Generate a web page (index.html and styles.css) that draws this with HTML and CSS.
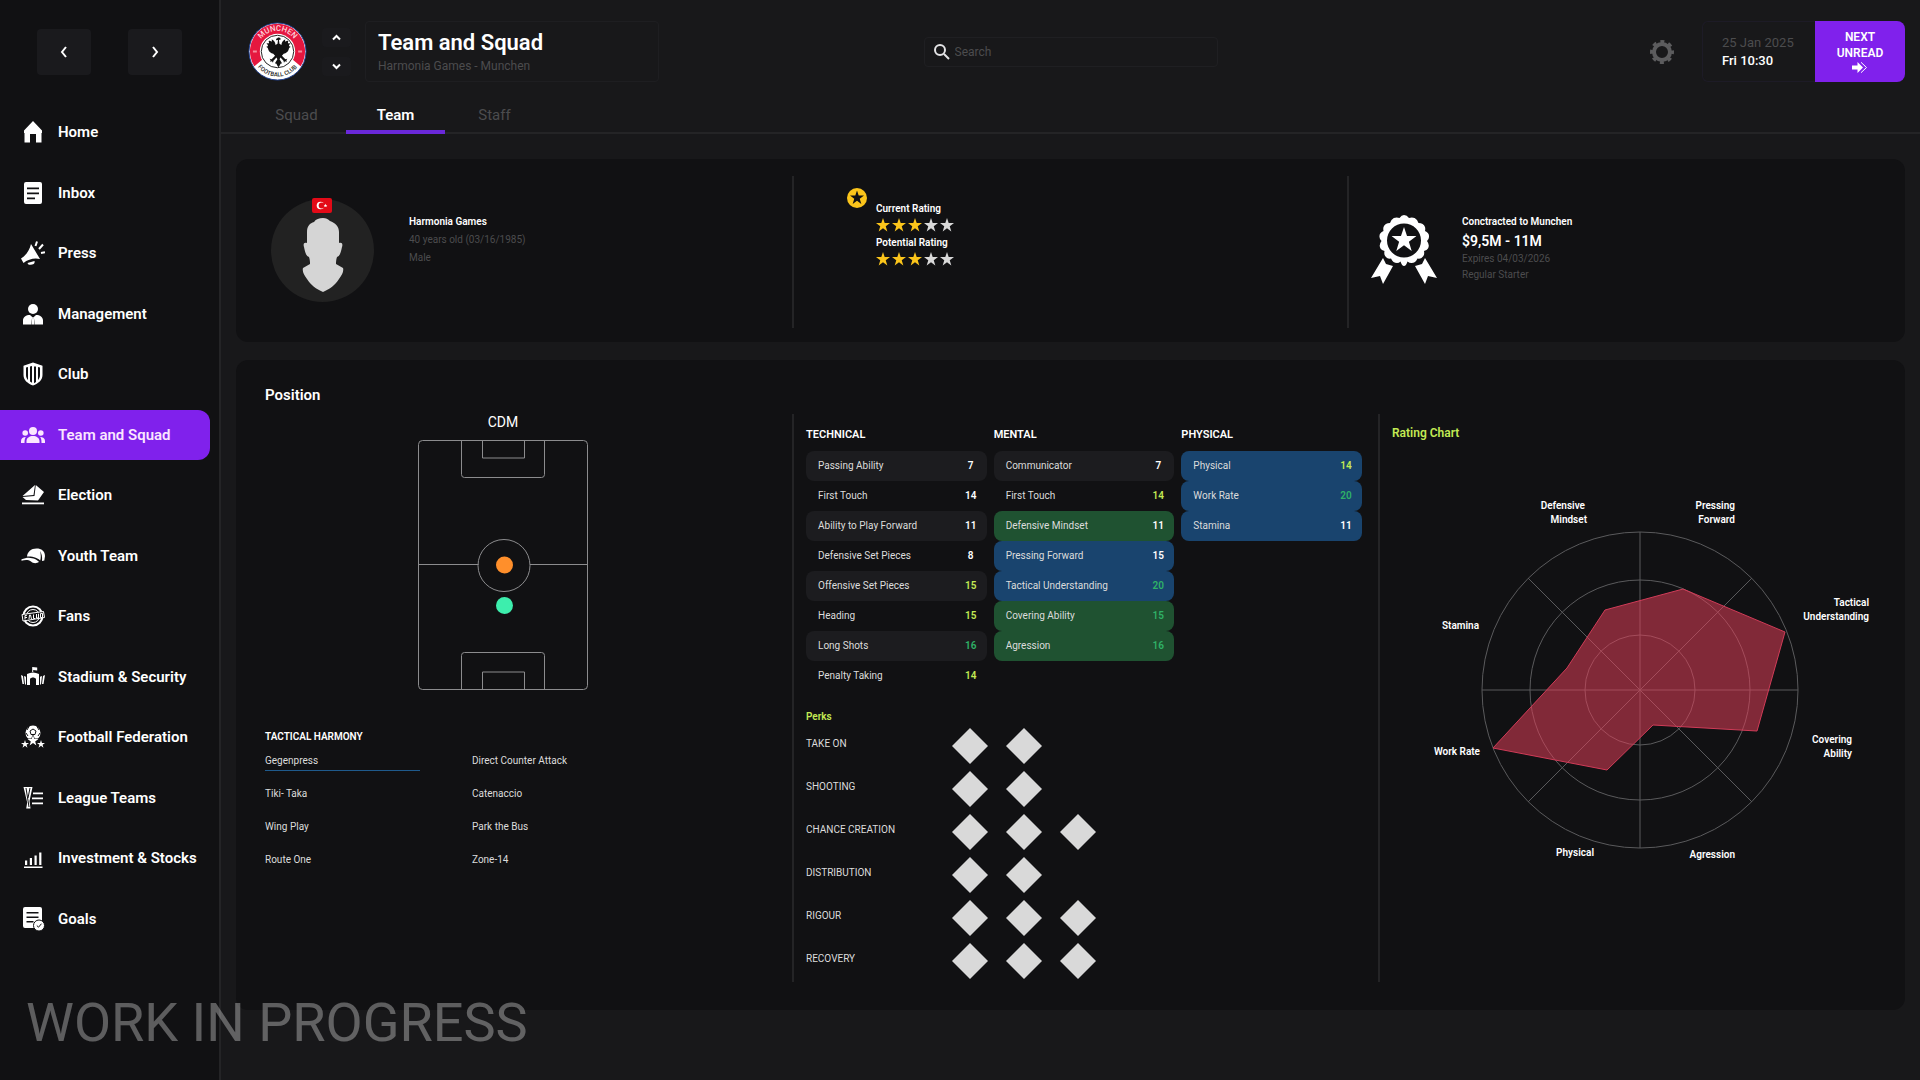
FILE: index.html
```html
<!DOCTYPE html>
<html lang="en">
<head>
<meta charset="utf-8">
<meta name="viewport" content="width=device-width, initial-scale=1">
<title>Team and Squad</title>
<link rel="stylesheet" href="styles.css">
</head>
<body>
<svg class="defs" aria-hidden="true">
  <symbol id="star" viewBox="0 0 24 24"><path d="M12 0l2.900 8.700H24l-7.300 5.400 2.700 8.900L12 17.600 4.600 23l2.700-8.900L0 8.700h9.100z"/></symbol>
</svg>
<div class="app">
  <aside class="sidebar">
    <div class="history">
      <button class="history-btn" type="button" aria-label="Back"><svg width="18" height="18" viewBox="0 0 18 18"><path d="M11 4L7 9l4 5"/></svg></button>
      <button class="history-btn" type="button" aria-label="Forward"><svg width="18" height="18" viewBox="0 0 18 18"><path d="M7 4l4 5-4 5"/></svg></button>
    </div>
    <nav class="menu" aria-label="Main">
      <a class="menu-item" href="#"><svg viewBox="0 0 24 24"><path d="M12 1l9 9.500V13h-.500v9.500H15V14H9v8.500H3.500V13H3v-2.500z"/></svg>Home</a>
      <a class="menu-item" href="#"><svg viewBox="0 0 24 24"><path fill-rule="evenodd" d="M5 1h14q2 0 2 2v18q0 2-2 2H5q-2 0-2-2V3q0-2 2-2zM6 6.500v1.700h12V6.500zm0 5v1.700h12v-1.700zm0 5v1.700h8v-1.700z"/></svg>Inbox</a>
      <a class="menu-item" href="#"><svg viewBox="0 0 24 24"><path d="M10 3l9 15c-5-1.500-12 0-16.500 4L0 17.500C5.500 14 8.500 9 10 3zM6.500 22l7-2c.5 2-.5 3-2.500 3.500S7 24 6.500 22z"/><path class="line" d="M14.500 5L16 .5M18 8l4-4.500M20 12l4-.8"/></svg>Press</a>
      <a class="menu-item" href="#"><svg viewBox="0 0 24 24"><circle cx="12" cy="7" r="5"/><path d="M2 22.500v-4c0-3.500 3-5.500 7-5.500l2.200 2-1 7.500zM22 22.500v-4c0-3.500-3-5.500-7-5.500l-2.200 2 1 7.500z"/><path d="M11.300 15h1.400l.8 7.500h-3z"/></svg>Management</a>
      <a class="menu-item" href="#"><svg viewBox="0 0 24 24"><path fill-rule="evenodd" d="M12 .5l9.500 3.200V13c0 5-4 8.500-9.500 10.500C6.500 21.500 2.500 18 2.500 13V3.700zM5 5.500V13c0 2 .8 3.700 2 5V5zm4-1v15l2 1.200V4zm4 0v16.700l2-1.200V4.500zm4 .5v13c1.200-1.300 2-3 2-5V5.500z"/></svg>Club</a>
      <a class="menu-item active" href="#" aria-current="page"><svg viewBox="0 0 24 24"><circle cx="12" cy="8" r="4"/><circle cx="4.200" cy="10" r="2.800"/><circle cx="19.800" cy="10" r="2.800"/><path d="M5.500 20v-2c0-3 3-5 6.500-5s6.500 2 6.500 5v2zM0 20v-2c0-2.500 2-4 5-4-1 1-1.500 2.500-1.500 6zM24 20v-2c0-2.500-2-4-5-4 1 1 1.500 2.500 1.500 6z"/></svg>Team and Squad</a>
      <a class="menu-item" href="#"><svg viewBox="0 0 24 24"><path d="M1.500 13L14 2l-1.500 10zM14.800 2L23 9l-6 8.500-12-.5-3.500-3 12-1z"/><path d="M1 19.500h22v1.800H1z"/></svg>Election</a>
      <a class="menu-item" href="#"><svg viewBox="0 0 24 24"><path d="M6 12.500C6.500 8 10 4.500 15.500 4.500c5 0 8.500 2.500 8.500 7.500l-.7 4.500-2.300.5c.5-4.500-.5-7.500-2-10 1 3.500 1 7 .2 9.500-3.700-3.500-8.200-4-13.200-4zM6 13.800c5 0 8.500.7 12 4-2.500 2.200-6 1.700-8-.3-3-2-6-1.500-9.500-.8v-1.500z"/></svg>Youth Team</a>
      <a class="menu-item" href="#"><svg viewBox="0 0 24 24"><circle class="line" cx="12" cy="12" r="9.500"/><circle class="thin" cx="12" cy="12" r="6.500"/><path class="plate" d="M1 10.500L22.500 7.500l1 6L2 17z"/><path class="thin" d="M4 15.500v-4l2-.3M4 13.500h2M8 15l.5-4h1l1 4M12.500 10.500v4h1.500M15.500 10v4h2v-4.300M19.500 9.500v4h2V9.300z"/></svg>Fans</a>
      <a class="menu-item" href="#"><svg viewBox="0 0 24 24"><path d="M0 10l2 1 1 8H1.500zM3 11l2 .7v7.800H4zM24 10l-2 1-1 8h1.500zM21 11l-2 .7v7.800h1zM6 9c4-2 8-2 12 0v11h-3v-6c-1-2-5-2-6 0v6H6zM11.200 7V2l5 .5v3l-4-.5v2z"/></svg>Stadium &amp; Security</a>
      <a class="menu-item" href="#"><svg viewBox="0 0 24 24"><circle cx="12" cy="8" r="7.500"/><path class="dark" d="M12 4l3 2-1 3.500h-4L9 6zM8 1.500L6 5M16 1.500L18 5M5 8l2 3M19 8l-2 3"/><use class="cut" href="#star" x="5" y="8.500" width="14" height="14"/><use href="#star" x="6.500" y="10" width="11" height="11"/><use href="#star" x="0" y="15" width="8" height="8"/><use href="#star" x="16" y="15" width="8" height="8"/></svg>Football Federation</a>
      <a class="menu-item" href="#"><svg viewBox="0 0 24 24"><path d="M2.500 1h9L8.500 15l1 7.500H5.200l1-6z"/><path class="dark" d="M5 2l3 19M9 2L7 12"/><path d="M12 6.500h10v1.800H12zM11 11.500h11v1.800H11zM11 16.500h11v1.800H11z"/></svg>League Teams</a>
      <a class="menu-item" href="#"><svg viewBox="0 0 24 24"><path d="M3 20.500h18.500V22H3zM4 14.500h2.200V19H4zM8.800 12H11v7H8.800zM13.500 9.500h2.200V19h-2.200zM18.200 6.500h2.200V19h-2.200z"/></svg>Investment &amp; Stocks</a>
      <a class="menu-item" href="#"><svg viewBox="0 0 24 24"><path fill-rule="evenodd" d="M4 0h15q2 0 2 2v19H4q-2 0-2-2V2q0-2 2-2zM5.500 5v1.500h12V5zm0 4.500V11h12V9.500zm0 4.500v1.500h7V14z"/><circle cx="18" cy="18.500" r="5.500" class="rim"/><path class="dark" d="M15.800 18.500l1.700 1.700 3-3.500"/></svg>Goals</a>
    </nav>
  </aside>

  <div class="page">
    <header class="header">
      <div class="topbar">
        <div class="club">
          <svg class="crest" viewBox="0 0 60 60" role="img" aria-label="Munchen Football Club">
            <defs>
              <path id="arc-top" d="M9 30a21 21 0 0 1 42 0"/>
              <path id="arc-bottom" d="M4.500 30a25.500 25.500 0 0 0 51 0"/>
            </defs>
            <circle cx="30" cy="30" r="29" fill="#fff" stroke="#1f3f8f" stroke-width="1"/>
            <path fill="#e5173f" d="M6.500 45A28 28 0 1 1 53.500 45L45 38H15z"/>
            <circle cx="30" cy="30" r="18" fill="#fff"/>
            <circle cx="30" cy="30" r="16.500" fill="none" stroke="#222" stroke-width="1"/>
            <text class="crest-top"><textPath href="#arc-top" startOffset="50%">MUNCHEN</textPath></text>
            <text class="crest-bottom"><textPath href="#arc-bottom" startOffset="50%">FOOTBALL CLUB</textPath></text>
            <path fill="#111" d="M30 16c1.500-.5 3 .2 3.500 1.500l-2 .7.500 4 2 1.300c.2-3 1.500-5 4-6-.5 1-.3 1.700.2 2.500 1-1 2-1 3-.5-.8.7-.7 1.500-.2 2.300 1-.5 1.700-.3 2.300.4-1.500.5-1.600 1.300-1.600 2.500.7-.3 1.300 0 1.600.8-1.500.4-1.600 1.500-2 2.800-.7 2.200-2.500 3.500-5 4l-1.800 2 3.500 3.500 2-.3-1 1.500.6 1.500-2-.5-1 1.500-.5-2-3-3.500-1 2 2.500 4-1.500.5-1 2-1.100 1.500-1.100-1.500-1-2-1.500-.5 2.500-4-1-2-3 3.500-.5 2-1-1.500-2 .5.600-1.500-1-1.500 2 .3 3.500-3.500-1.800-2c-2.500-.5-4.300-1.800-5-4-.4-1.300-.5-2.400-2-2.800.3-.8.900-1.100 1.600-.8 0-1.200-.1-2-1.600-2.500.6-.7 1.300-.9 2.300-.4.5-.8.600-1.600-.2-2.300 1-.5 2-.5 3 .5.5-.8.700-1.500.2-2.500 2.500 1 3.800 3 4 6l2-1.300.5-4-2 .3c0-1.500 1-2.300 2-2.200z"/>
            <path d="M5 30h4M51 30h4" stroke="#f58a9c" stroke-width="2"/>
          </svg>
          <div class="stepper">
            <button type="button" aria-label="Previous club"><svg width="11" height="11" viewBox="0 0 11 11"><path d="M2 7.500L5.500 4 9 7.500"/></svg></button>
            <button type="button" aria-label="Next club"><svg width="11" height="11" viewBox="0 0 11 11"><path d="M2 3.500L5.500 7 9 3.500"/></svg></button>
          </div>
          <div class="title-box">
            <h1>Team and Squad</h1>
            <p>Harmonia Games - Munchen</p>
          </div>
        </div>
        <label class="search">
          <svg width="18" height="18" viewBox="0 0 18 18"><circle cx="7" cy="7" r="5"/><path d="M11 11l5 5"/></svg>
          <input type="search" placeholder="Search" aria-label="Search">
        </label>
        <div class="tools">
          <button class="gear" type="button" aria-label="Settings"><svg width="26" height="26" viewBox="0 0 26 26"><circle cx="13" cy="13" r="8" fill="none" stroke="#5c5c5e" stroke-width="4"/><circle cx="13" cy="13" r="10.500" fill="none" stroke="#5c5c5e" stroke-width="3" stroke-dasharray="4 4.250" stroke-dashoffset="2"/></svg></button>
          <div class="clock"><span>25 Jan 2025</span><strong>Fri 10:30</strong></div>
          <button class="next" type="button">NEXT<br>UNREAD<svg width="18" height="13" viewBox="0 0 18 13"><path d="M1 4.500h5.500V1l5.500 5.500L6.500 12V8.500H1z"/><path class="thin-line" d="M10 1.300l5.500 5.200L10 11.700"/></svg></button>
        </div>
      </div>
      <nav class="tabs" aria-label="Sections">
        <a href="#">Squad</a>
        <a class="current" href="#" aria-current="page">Team</a>
        <a href="#">Staff</a>
      </nav>
    </header>

    <main class="content">
      <section class="card profile">
        <div class="cell person">
          <div class="avatar">
            <svg class="face" width="42" height="74" viewBox="0 0 42 74"><path d="M21 0c3 0 5 1 7 3 5 2 9 5 9 11v11c3-1 4 1 3 4-1 5-2 9-5 10-1 3-1 5-1 7l7 4c1 3-1 7-4 11-4 6-9 10-16 13C14 71 9 67 5 61c-3-4-5-8-4-11l7-4c0-2 0-4-1-7-3-1-4-5-5-10-1-3 0-5 3-4V14c0-6 3-9 7-10 2-3 5-4 9-4z"/></svg>
            <svg class="flag" width="20" height="15" viewBox="0 0 20 15"><rect width="20" height="15" rx="2" fill="#e30a17"/><circle cx="8.500" cy="7.500" r="3.800" fill="#fff"/><circle cx="9.700" cy="7.500" r="3" fill="#e30a17"/><use href="#star" x="11.500" y="5.500" width="4" height="4" fill="#fff"/></svg>
          </div>
          <div class="facts"><strong>Harmonia Games</strong><span>40 years old (03/16/1985)</span><span>Male</span></div>
        </div>
        <div class="cell rating">
          <svg class="badge" width="20" height="20" viewBox="0 0 20 20"><circle cx="10" cy="10" r="10" fill="#fbc51b"/><use href="#star" x="3" y="2.500" width="14" height="14" fill="#111113"/></svg>
          <div class="scores">
            <strong>Current Rating</strong>
            <div class="stars" role="img" aria-label="3 of 5"><svg><use href="#star"/></svg><svg><use href="#star"/></svg><svg><use href="#star"/></svg><svg class="off"><use href="#star"/></svg><svg class="off"><use href="#star"/></svg></div>
            <strong>Potential Rating</strong>
            <div class="stars" role="img" aria-label="3 of 5"><svg><use href="#star"/></svg><svg><use href="#star"/></svg><svg><use href="#star"/></svg><svg class="off"><use href="#star"/></svg><svg class="off"><use href="#star"/></svg></div>
          </div>
        </div>
        <div class="cell contract">
          <svg class="medal" width="66" height="70" viewBox="0 0 66 70"><path d="M12 43l3 6 7 2-10 18-3-8-9 2zM54 43l-3 6-7 2 10 18 3-8 9 2z"/><path fill-rule="evenodd" d="M33 0q3 0 5 3 5-1.500 8 2 1 2 1.500 3 5 0 6.500 4 .5 2 0 4 4.500 2 4 6 0 2-2 4 3 4 1 7.500-1 1.700-4 2.500 1 5-2.500 7-2 1-4 .5-2 4.500-6 4.500-2 0-4-1.500Q35 51 33 51t-3.500-4.500Q28 48 26 48q-4 0-6-4.500-2 .5-4-.5-3.500-2-2.500-7-3-.8-4-2.500-2-3.500 1-7.500-2-2-2-4-.5-4 4-6-.5-2 0-4 1.500-4 6.500-4 .5-1 1.500-3 3-3.500 8-2 2-3 4.500-3zM33 8.500a17 17 0 1 0 0 34 17 17 0 0 0 0-34z"/><use href="#star" x="20.500" y="12" width="25" height="25"/></svg>
          <div class="facts"><strong>Conctracted to Munchen</strong><b class="fee">$9,5M - 11M</b><span class="tight">Expires 04/03/2026</span><span class="tight">Regular Starter</span></div>
        </div>
      </section>

      <section class="card detail">
        <h2>Position</h2>
        <div class="columns">
          <div class="position">
            <p class="role">CDM</p>
            <svg class="pitch" width="170" height="250" viewBox="0 0 170 250" role="img" aria-label="Pitch position">
              <rect x=".5" y=".5" width="169" height="249" rx="4"/>
              <path d="M.5 124.500h60M112 124.500h57.500M43.500.5v34q0 3 3 3h77q3 0 3-3V.5M64.500.5v17.500h42V.5M43.500 249.500v-34q0-3 3-3h77q3 0 3 3v34M64.500 249.500v-17.500h42v17.500"/>
              <circle cx="86" cy="125.500" r="26"/>
              <circle class="dot-orange" cx="86.500" cy="125" r="8.500"/>
              <circle class="dot-green" cx="86.500" cy="165.500" r="8.500"/>
            </svg>
            <h3 class="tactics-title">TACTICAL HARMONY</h3>
            <ul class="tactics">
              <li class="chosen">Gegenpress</li><li>Direct Counter Attack</li>
              <li>Tiki- Taka</li><li>Catenaccio</li>
              <li>Wing Play</li><li>Park the Bus</li>
              <li>Route One</li><li>Zone-14</li>
            </ul>
          </div>

          <div class="attributes">
            <div class="tables">
              <table>
                <caption>TECHNICAL</caption>
                <tbody>
                <tr class="shade"><td>Passing Ability</td><td>7</td></tr>
                <tr><td>First Touch</td><td>14</td></tr>
                <tr class="shade"><td>Ability to Play Forward</td><td>11</td></tr>
                <tr><td>Defensive Set Pieces</td><td>8</td></tr>
                <tr class="shade"><td>Offensive Set Pieces</td><td class="good">15</td></tr>
                <tr><td>Heading</td><td class="good">15</td></tr>
                <tr class="shade"><td>Long Shots</td><td class="great">16</td></tr>
                <tr><td>Penalty Taking</td><td class="good">14</td></tr>
                </tbody>
              </table>
              <table>
                <caption>MENTAL</caption>
                <tbody>
                <tr class="shade"><td>Communicator</td><td>7</td></tr>
                <tr><td>First Touch</td><td class="good">14</td></tr>
                <tr class="green"><td>Defensive Mindset</td><td>11</td></tr>
                <tr class="blue"><td>Pressing Forward</td><td>15</td></tr>
                <tr class="blue"><td>Tactical Understanding</td><td class="great">20</td></tr>
                <tr class="green"><td>Covering Ability</td><td class="great">15</td></tr>
                <tr class="green"><td>Agression</td><td class="great">16</td></tr>
                </tbody>
              </table>
              <table>
                <caption>PHYSICAL</caption>
                <tbody>
                <tr class="blue"><td>Physical</td><td class="good">14</td></tr>
                <tr class="blue"><td>Work Rate</td><td class="great">20</td></tr>
                <tr class="blue"><td>Stamina</td><td>11</td></tr>
                </tbody>
              </table>
            </div>
            <h3 class="perks-title">Perks</h3>
            <ul class="perks">
              <li><span>TAKE ON</span><i></i><i></i></li>
              <li><span>SHOOTING</span><i></i><i></i></li>
              <li><span>CHANCE CREATION</span><i></i><i></i><i></i></li>
              <li><span>DISTRIBUTION</span><i></i><i></i></li>
              <li><span>RIGOUR</span><i></i><i></i><i></i></li>
              <li><span>RECOVERY</span><i></i><i></i><i></i></li>
            </ul>
          </div>

          <div class="chart">
            <h3>Rating Chart</h3>
            <svg class="radar" viewBox="0 0 490 380" role="img" aria-label="Rating chart">
              <g class="grid">
                <circle cx="248" cy="200" r="158"/><circle cx="248" cy="200" r="110"/><circle cx="248" cy="200" r="55"/>
                <path d="M248 42v316M90 200h316M136 88l224 224M360 88L136 312"/>
              </g>
              <polygon points="213,120 291,99 393,142 365,241 261,235 215,280 101,258 175,178"/>
              <g class="labels">
                <text x="193" y="19">Defensive</text><text x="195" y="33">Mindset</text>
                <text x="343" y="19">Pressing</text><text x="343" y="33">Forward</text>
                <text x="477" y="116">Tactical</text><text x="477" y="130">Understanding</text>
                <text x="460" y="253">Covering</text><text x="460" y="267">Ability</text>
                <text x="343" y="368">Agression</text><text x="202" y="366">Physical</text>
                <text x="88" y="265">Work Rate</text><text x="87" y="139">Stamina</text>
              </g>
            </svg>
          </div>
        </div>
      </section>
    </main>
  </div>
  <p class="watermark">WORK IN PROGRESS</p>
</div>
</body>
</html>
```
FILE: styles.css
```css
:root {
  --panel: #111113;
  --page: #18181a;
  --raised: #1a1a1d;
  --rule: #242426;
  --muted: #4c4c4e;
  --violet: #8021ec;
  --lime: #c3ea54;
}

* { box-sizing: border-box; }

body {
  margin: 0;
  background: var(--page);
  color: #fff;
  font-family: Roboto, "Noto Sans", sans-serif;
  font-size: 10px;
  line-height: 18px;
}

h1, h2, h3, p, ul { margin: 0; padding: 0; }
ul { list-style: none; }
a { color: inherit; text-decoration: none; }
button { border: 0; padding: 0; color: #fff; font: inherit; cursor: pointer; }
svg { display: block; fill: currentColor; }
.line { fill: none; stroke: currentColor; stroke-width: 2; }
.thin-line { fill: none; stroke: currentColor; stroke-width: 1; }
.defs { display: none; }

.app { display: flex; min-height: 100vh; }

/* Sidebar */
.sidebar {
  display: flex;
  flex: none;
  flex-direction: column;
  width: 221px;
  padding: 29px 0 136px;
  border-right: 2px solid var(--rule);
  background: var(--panel);
}
.history { display: flex; gap: 37px; padding-left: 37px; margin-bottom: 32px; }
.history-btn {
  display: grid;
  place-items: center;
  width: 54px;
  height: 46px;
  border-radius: 4px;
  background: var(--raised);
}
.history-btn svg, .stepper svg { fill: none; stroke: #fff; stroke-width: 2; }
.menu { display: flex; flex: 1; flex-direction: column; justify-content: space-between; }
.menu-item {
  display: flex;
  align-items: center;
  gap: 13px;
  height: 50px;
  margin-right: 9px;
  padding-left: 21px;
  border-radius: 0 12px 12px 0;
  font-size: 15px;
  font-weight: 600;
}
.menu-item svg { width: 24px; height: 24px; }
.menu-item.active { background: var(--violet); color: #fbe6ff; }
.menu-item .cut { fill: var(--panel); }
.menu-item .dark { fill: none; stroke: var(--panel); stroke-width: 1; }
.menu-item .thin { fill: none; stroke: currentColor; stroke-width: 1; }
.menu-item .plate { fill: var(--panel); stroke: currentColor; stroke-width: 1; }
.menu-item .rim { stroke: var(--panel); stroke-width: 1; }

/* Header */
.page { flex: 1; min-width: 0; }
.header { padding-top: 21px; border-bottom: 2px solid var(--rule); }
.topbar { display: grid; grid-template-columns: 1fr 294px 1fr; align-items: center; padding: 0 15px; }
.club { display: flex; align-items: center; padding-left: 12px; }
.crest { width: 59px; height: 59px; }
.crest text { font-size: 8px; font-weight: 500; text-anchor: middle; }
.crest .crest-top { fill: #ffd3da; }
.crest .crest-bottom { font-size: 6px; fill: #222; }
.stepper { display: grid; gap: 10px; margin: 0 14px 0 15px; }
.stepper button { display: grid; place-items: center; width: 29px; height: 19px; border-radius: 4px; background: var(--raised); }
.title-box { width: 294px; height: 61px; padding: 8px 12px; border: 1px solid #1e1e21; border-radius: 4px; }
.title-box h1 { font-size: 22px; font-weight: 600; line-height: 26px; }
.title-box p { color: var(--muted); font-size: 12px; line-height: 20px; }
.search { display: flex; align-items: center; gap: 4px; height: 30px; padding-left: 8px; border: 1px solid #1f1f22; border-radius: 4px; }
.search svg { flex: none; fill: none; stroke: #e4e4e6; stroke-width: 2; }
.search input { flex: 1; min-width: 0; border: 0; padding: 0; outline: 0; background: none; color: #fff; font: inherit; font-size: 12px; }
.search input::placeholder { color: var(--muted); opacity: 1; }
.tools { display: flex; align-items: center; justify-content: flex-end; }
.gear { margin-right: 27px; background: none; }
.clock { display: flex; flex-direction: column; justify-content: center; width: 113px; height: 61px; padding-left: 19px; border: 1px solid #1d1b26; border-right: 0; border-radius: 6px 0 0 6px; font-size: 13px; }
.clock span { color: var(--muted); }
.clock strong { font-weight: 500; }
.next { display: flex; flex-direction: column; align-items: center; justify-content: center; width: 90px; height: 61px; border-radius: 0 8px 8px 0; background: var(--violet); font-size: 12px; font-weight: 600; line-height: 16px; }
.tabs { display: flex; margin-bottom: -2px; padding-left: 26px; }
.tabs a { display: grid; place-items: center; width: 99px; height: 52px; padding-top: 18px; border-bottom: 4px solid transparent; color: var(--muted); font-size: 15px; }
.tabs .current { border-color: #6a28d9; border-radius: 4px 4px 0 0; color: #fff; font-weight: 600; }

/* Cards */
.content { display: grid; gap: 18px; padding: 25px 15px 70px; }
.card { border-radius: 12px; background: var(--panel); }
.profile { display: grid; grid-template-columns: 556fr 555fr 558fr; padding: 17px 0 14px; }
.cell { display: flex; align-items: flex-start; height: 152px; }
.cell + .cell { border-left: 2px solid var(--rule); }
.person { gap: 35px; padding: 23px 0 0 35px; }
.avatar { position: relative; display: grid; place-items: center; width: 103px; height: 103px; border-radius: 50%; background: #222; }
.face { margin-top: 8px; fill: #d5d5d5; }
.flag { position: absolute; top: -1px; left: 41px; }
.facts { display: flex; flex-direction: column; margin-top: 14px; color: var(--muted); }
.facts strong, .scores strong { color: #fff; font-weight: 600; }
.fee { color: #fff; font-size: 14px; font-weight: 600; line-height: 20px; }
.facts .tight { line-height: 16px; }
.rating { gap: 9px; padding: 12px 0 0 53px; }
.scores { display: flex; flex-direction: column; margin-top: 12px; }
.stars { display: flex; gap: 2px; margin-bottom: 2px; color: #fbc51b; }
.stars svg { width: 14px; height: 14px; }
.stars .off { color: #d9d9d9; }
.contract { gap: 25px; padding: 23px 0 0 22px; }
.medal { margin-top: 16px; }

/* Detail */
.detail { padding: 25px 0 28px; }
.detail h2 { padding-left: 29px; margin-bottom: 9px; font-size: 15px; font-weight: 600; line-height: 20px; }
.detail h3 { font-size: 12px; font-weight: 600; }
.columns { display: grid; grid-template-columns: 556fr 586fr 527fr; }
.position { padding: 0 51px 0 29px; }
.role { font-size: 14px; line-height: 16px; text-align: center; }
.pitch { margin: 10px auto 38px; fill: none; stroke: #8c8c8e; stroke-width: 1; }
.pitch .dot-orange { fill: #ff8f2b; stroke: none; }
.pitch .dot-green { fill: #3deead; stroke: none; }
.detail .tactics-title { font-size: 10px; }
.tactics { display: grid; grid-template-columns: 155px auto; gap: 8px 52px; }
.tactics li { height: 25px; padding-top: 6px; border-bottom: 1px solid transparent; color: #dcdcdc; }
.tactics .chosen { border-color: #1f5a8c; }
.attributes { padding: 11px 16px 3px 12px; border-left: 2px solid var(--rule); }
.tables { display: grid; grid-template-columns: repeat(3, 1fr); align-items: start; gap: 7px; }
table { width: 100%; border-spacing: 0; }
caption { height: 26px; padding-top: 1px; font-size: 11px; font-weight: 600; text-align: left; }
td { height: 30px; padding: 0 0 0 12px; color: #dcdcdc; }
td:first-child { border-radius: 8px 0 0 8px; }
td:last-child { width: 32px; padding: 0; border-radius: 0 8px 8px 0; color: #fff; font-weight: 600; text-align: center; }
.shade td { background: #1c1c1f; }
.green td { background: #1f5231; }
.blue td { background: #19446e; }
td.good:last-child { color: var(--lime); }
td.great:last-child { color: #2fb167; }
.detail .perks-title { margin: 17px 0 2px; color: var(--lime); font-size: 10px; }
.perks { display: grid; gap: 7px; }
.perks li { display: flex; align-items: center; gap: 18px; height: 36px; }
.perks span { width: 128px; padding-bottom: 5px; color: #dcdcdc; }
.perks i { width: 36px; height: 36px; background: #d9d9d9; clip-path: polygon(50% 0, 100% 50%, 50% 100%, 0 50%); }
.chart { padding: 10px 0 0 12px; border-left: 2px solid var(--rule); }
.chart h3 { margin-bottom: 48px; color: var(--lime); }
.radar { width: 100%; max-width: 490px; }
.radar .grid { fill: none; stroke: #5a5a5c; stroke-width: 1; }
.radar polygon { fill: #e83f5b; fill-opacity: .52; stroke: #d03c58; stroke-width: 1; }
.radar .labels { font-size: 10px; font-weight: 600; text-anchor: end; }

.watermark {
  position: absolute;
  top: 988px;
  left: 26px;
  color: rgba(255, 255, 255, .32);
  font-size: 54px;
  font-weight: 400;
  line-height: 70px;
  pointer-events: none;
}
```
